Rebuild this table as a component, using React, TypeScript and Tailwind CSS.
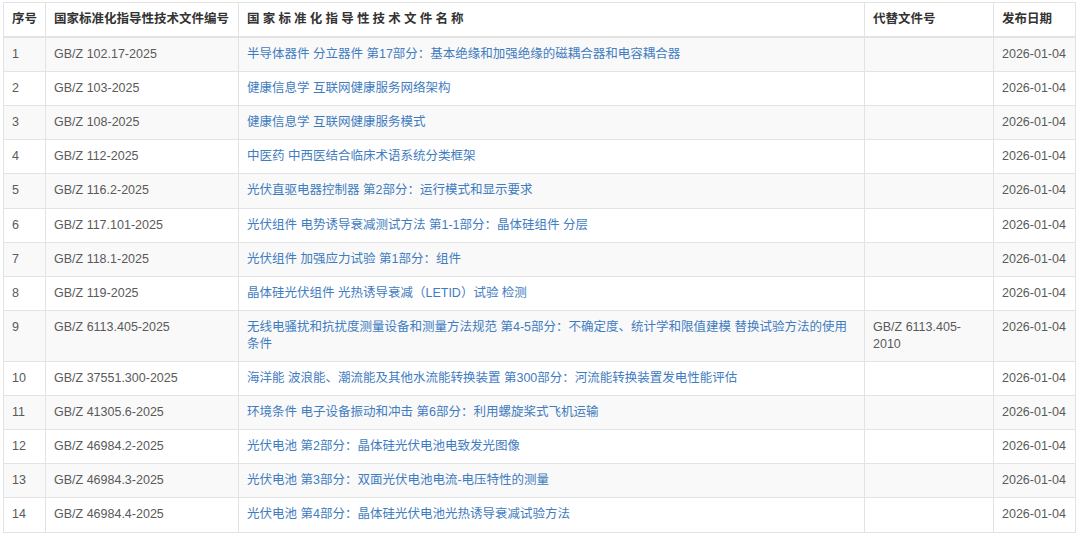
const ROWS = [
  { no: 1, code: 'GB/Z 102.17-2025', name: '半导体器件 分立器件 第17部分：基本绝缘和加强绝缘的磁耦合器和电容耦合器', replace: '', date: '2026-01-04' },
  { no: 2, code: 'GB/Z 103-2025', name: '健康信息学 互联网健康服务网络架构', replace: '', date: '2026-01-04' },
  { no: 3, code: 'GB/Z 108-2025', name: '健康信息学 互联网健康服务模式', replace: '', date: '2026-01-04' },
  { no: 4, code: 'GB/Z 112-2025', name: '中医药 中西医结合临床术语系统分类框架', replace: '', date: '2026-01-04' },
  { no: 5, code: 'GB/Z 116.2-2025', name: '光伏直驱电器控制器 第2部分：运行模式和显示要求', replace: '', date: '2026-01-04' },
  { no: 6, code: 'GB/Z 117.101-2025', name: '光伏组件 电势诱导衰减测试方法 第1-1部分：晶体硅组件 分层', replace: '', date: '2026-01-04' },
  { no: 7, code: 'GB/Z 118.1-2025', name: '光伏组件 加强应力试验 第1部分：组件', replace: '', date: '2026-01-04' },
  { no: 8, code: 'GB/Z 119-2025', name: '晶体硅光伏组件 光热诱导衰减（LETID）试验 检测', replace: '', date: '2026-01-04' },
  { no: 9, code: 'GB/Z 6113.405-2025', name: '无线电骚扰和抗扰度测量设备和测量方法规范 第4-5部分：不确定度、统计学和限值建模 替换试验方法的使用条件', replace: 'GB/Z 6113.405-2010', date: '2026-01-04' },
  { no: 10, code: 'GB/Z 37551.300-2025', name: '海洋能 波浪能、潮流能及其他水流能转换装置 第300部分：河流能转换装置发电性能评估', replace: '', date: '2026-01-04' },
  { no: 11, code: 'GB/Z 41305.6-2025', name: '环境条件 电子设备振动和冲击 第6部分：利用螺旋桨式飞机运输', replace: '', date: '2026-01-04' },
  { no: 12, code: 'GB/Z 46984.2-2025', name: '光伏电池 第2部分：晶体硅光伏电池电致发光图像', replace: '', date: '2026-01-04' },
  { no: 13, code: 'GB/Z 46984.3-2025', name: '光伏电池 第3部分：双面光伏电池电流-电压特性的测量', replace: '', date: '2026-01-04' },
  { no: 14, code: 'GB/Z 46984.4-2025', name: '光伏电池 第4部分：晶体硅光伏电池光热诱导衰减试验方法', replace: '', date: '2026-01-04' },
];

const cell = 'border border-[#e3e3e3] px-[8px] py-[8px] align-top';

export default function App() {
  return (
    <div
      className="w-[1080px] h-[538px] overflow-hidden bg-white pl-[3px] pt-[2px] text-[12.5px] leading-[17.1px] text-[#5a5a5a]"
      style={{ fontFamily: '"Liberation Sans", "Noto Sans CJK SC", sans-serif' }}
    >
      <table className="w-[1072px] table-fixed border-collapse">
        <colgroup>
          <col className="w-[42px]" />
          <col className="w-[193px]" />
          <col className="w-[626px]" />
          <col className="w-[129px]" />
          <col className="w-[82px]" />
        </colgroup>
        <thead>
          <tr className="text-[#333] font-bold">
            <th className={`${cell} border-b-2 text-left whitespace-nowrap`}>序号</th>
            <th className={`${cell} border-b-2 text-left whitespace-nowrap`}>国家标准化指导性技术文件编号</th>
            <th className={`${cell} border-b-2 text-left tracking-[3.2px]`}>国家标准化指导性技术文件名称</th>
            <th className={`${cell} border-b-2 text-left`}>代替文件号</th>
            <th className={`${cell} border-b-2 text-left whitespace-nowrap`}>发布日期</th>
          </tr>
        </thead>
        <tbody>
          {ROWS.map((r, i) => (
            <tr key={r.no} className={i % 2 === 0 ? 'bg-[#f9f9f9]' : 'bg-white'}>
              <td className={cell}>{r.no}</td>
              <td className={`${cell} whitespace-nowrap`}>{r.code}</td>
              <td className={`${cell} text-[#3f7cc0]`}>{r.name}</td>
              <td className={cell}>{r.replace}</td>
              <td className={`${cell} whitespace-nowrap`}>{r.date}</td>
            </tr>
          ))}
        </tbody>
      </table>
    </div>
  );
}
